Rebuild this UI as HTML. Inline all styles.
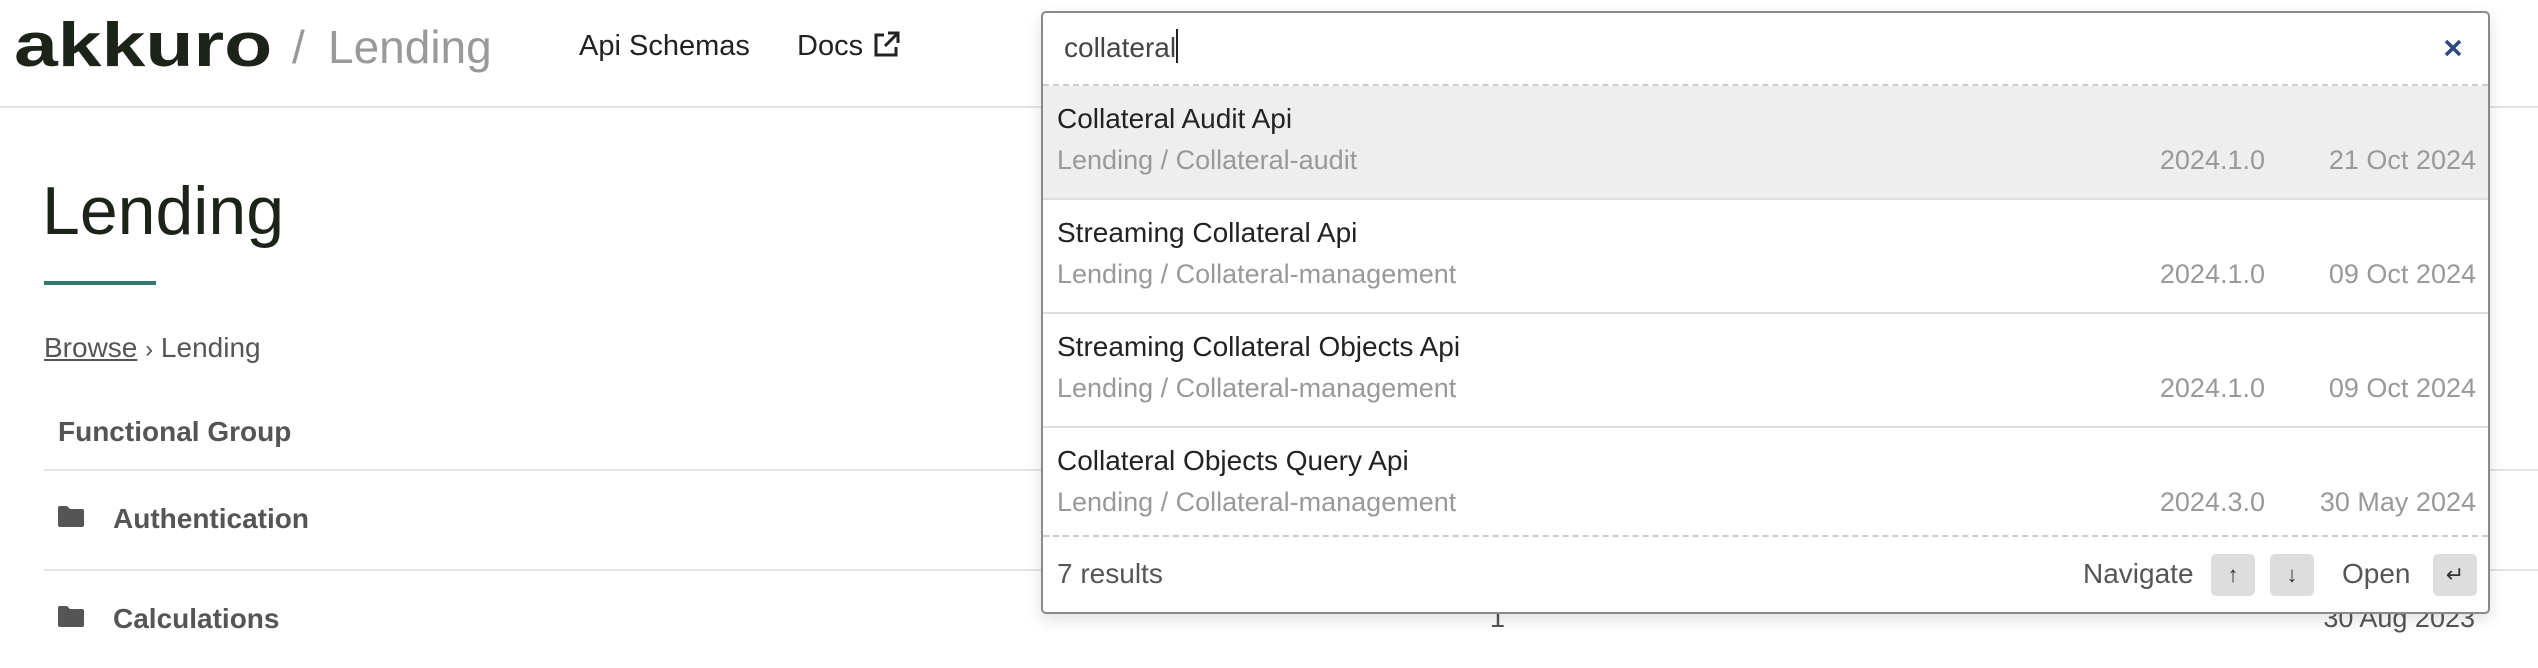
<!DOCTYPE html>
<html><head><meta charset="utf-8"><style>
*{margin:0;padding:0;box-sizing:border-box}
body{width:2538px;height:668px;overflow:hidden;background:#fff;font-family:"Liberation Sans",sans-serif;position:relative}
.a{position:absolute;white-space:nowrap}
.hl{position:absolute;height:2px;background:#e3e3e3}
.box{position:absolute;left:1041px;top:11px;width:1449px;height:603px;border:2px solid #8a8a8a;border-radius:5px;background:#fff;box-shadow:0 6px 16px rgba(0,0,0,.12);overflow:hidden}
.row{position:absolute;left:0;width:100%;height:114px;border-bottom:2px solid #ddd}
.t{position:absolute;left:14px;top:17px;font-size:28px;color:#222}
.s{position:absolute;left:14px;top:59px;font-size:27px;color:#999}
.v{position:absolute;right:223px;top:59px;font-size:27px;color:#999}
.d{position:absolute;right:12px;top:59px;font-size:27px;color:#999}
.k{position:absolute;top:541px;width:44px;height:42px;background:#ddd;border-radius:5px;font-size:22px;color:#333;text-align:center;line-height:42px}
</style></head><body>
<div class="a" style="left:14px;top:10px;font-size:62px;font-weight:bold;color:#1c2419;transform:scaleX(1.27);transform-origin:left">akkuro</div>
<div class="a" style="left:292px;top:20px;font-size:46px;color:#999">/</div>
<div class="a" style="left:328px;top:20px;font-size:46px;color:#999">Lending</div>
<div class="a" style="left:579px;top:30px;font-size:29px;color:#222">Api Schemas</div>
<div class="a" style="left:797px;top:30px;font-size:29px;color:#222">Docs</div>
<svg class="a" style="left:871px;top:30px" width="30" height="30" viewBox="0 0 30 30" fill="none" stroke="#222" stroke-width="3"><path d="M13 5H5v20h20v-8"/><path d="M17 3h10v10M27 3L14 16"/></svg>
<div class="hl" style="left:0;top:106px;width:2538px"></div>
<div class="a" style="left:42px;top:172px;font-size:68px;color:#1c2419">Lending</div>
<div class="a" style="left:44px;top:281px;width:112px;height:4px;background:#2f7a6a"></div>
<div class="a" style="left:44px;top:332px;font-size:28px;color:#555"><span style="text-decoration:underline">Browse</span> <span style="font-size:24px">&rsaquo;</span> Lending</div>
<div class="a" style="left:58px;top:416px;font-size:28px;font-weight:bold;color:#555">Functional Group</div>
<div class="hl" style="left:44px;top:469px;width:2494px"></div>
<svg class="a" style="left:58px;top:505px" width="26" height="22" viewBox="0 0 26 22"><path d="M0 3a2 2 0 012-2h7l3 3h12a2 2 0 012 2v14a2 2 0 01-2 2H2a2 2 0 01-2-2z" fill="#555"/></svg>
<div class="a" style="left:113px;top:503px;font-size:28px;font-weight:bold;color:#555">Authentication</div>
<div class="hl" style="left:44px;top:569px;width:2494px"></div>
<svg class="a" style="left:58px;top:605px" width="26" height="22" viewBox="0 0 26 22"><path d="M0 3a2 2 0 012-2h7l3 3h12a2 2 0 012 2v14a2 2 0 01-2 2H2a2 2 0 01-2-2z" fill="#555"/></svg>
<div class="a" style="left:113px;top:603px;font-size:28px;font-weight:bold;color:#555">Calculations</div>
<div class="a" style="left:1490px;top:603px;font-size:27px;color:#555">1</div>
<div class="a" style="right:63px;top:603px;font-size:27px;color:#555">30 Aug 2023</div>
<div class="box">
 <div class="a" style="left:21px;top:16px;font-size:28px;color:#444">collateral<span style="display:inline-block;width:2px;height:34px;background:#222;vertical-align:-6px"></span></div>
 <svg class="a" style="left:1400px;top:25px" width="20" height="20" viewBox="0 0 20 20" stroke="#2c4a7f" stroke-width="3.5"><path d="M3 3l14 14M17 3L3 17"/></svg>
 <div class="a" style="left:0;top:71px;width:100%;border-top:2px dashed #ccc"></div>
 <div class="row" style="top:73px;background:#eee"><div class="t">Collateral Audit Api</div><div class="s">Lending / Collateral-audit</div><div class="v">2024.1.0</div><div class="d">21 Oct 2024</div></div>
 <div class="row" style="top:187px"><div class="t">Streaming Collateral Api</div><div class="s">Lending / Collateral-management</div><div class="v">2024.1.0</div><div class="d">09 Oct 2024</div></div>
 <div class="row" style="top:301px"><div class="t">Streaming Collateral Objects Api</div><div class="s">Lending / Collateral-management</div><div class="v">2024.1.0</div><div class="d">09 Oct 2024</div></div>
 <div class="row" style="top:415px;border-bottom:2px dashed #ccc;height:109px"><div class="t">Collateral Objects Query Api</div><div class="s">Lending / Collateral-management</div><div class="v">2024.3.0</div><div class="d">30 May 2024</div></div>
 <div class="a" style="left:14px;top:545px;font-size:28px;color:#555">7 results</div>
 <div class="a" style="left:1040px;top:545px;font-size:28px;color:#555">Navigate</div>
 <div class="k" style="left:1168px">&#8593;</div>
 <div class="k" style="left:1227px">&#8595;</div>
 <div class="a" style="left:1299px;top:545px;font-size:28px;color:#555">Open</div>
 <div class="k" style="left:1390px">&#8629;</div>
</div>
</body></html>
